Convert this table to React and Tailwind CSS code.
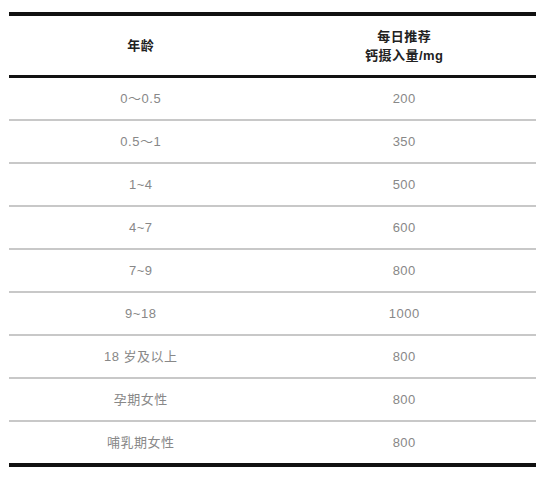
export default function App() {
  const rows = [
    ["0～0.5", "200"],
    ["0.5～1", "350"],
    ["1~4", "500"],
    ["4~7", "600"],
    ["7~9", "800"],
    ["9~18", "1000"],
    ["18 岁及以上", "800"],
    ["孕期女性", "800"],
    ["哺乳期女性", "800"],
  ];
  return (
    <div
      className="w-[547px] h-[480px] bg-white pt-[12px]"
      style={{ fontFamily: '"Liberation Sans", "Noto Sans CJK SC", sans-serif' }}
    >
      <div className="ml-[9px] w-[527px] border-t-4 border-b-4 border-[#111]">
        <div className="grid grid-cols-2 h-[62px] border-b-[3px] border-[#111] text-[13px] font-bold text-[#222] tracking-[0.5px]">
          <div className="flex items-center justify-center">年龄</div>
          <div className="flex flex-col items-center justify-center leading-[19px]">
            <span>每日推荐</span>
            <span>钙摄入量/mg</span>
          </div>
        </div>
        {rows.map((r, i) => (
          <div
            key={i}
            className={
              i < rows.length - 1
                ? "grid grid-cols-2 h-[43px] border-b-2 border-[#c8c8c8] text-[13px] text-[#888] tracking-[0.5px]"
                : "grid grid-cols-2 h-[41px] text-[13px] text-[#888] tracking-[0.5px]"
            }
          >
            <div className="flex items-center justify-center">{r[0]}</div>
            <div className="flex items-center justify-center">{r[1]}</div>
          </div>
        ))}
      </div>
    </div>
  );
}
